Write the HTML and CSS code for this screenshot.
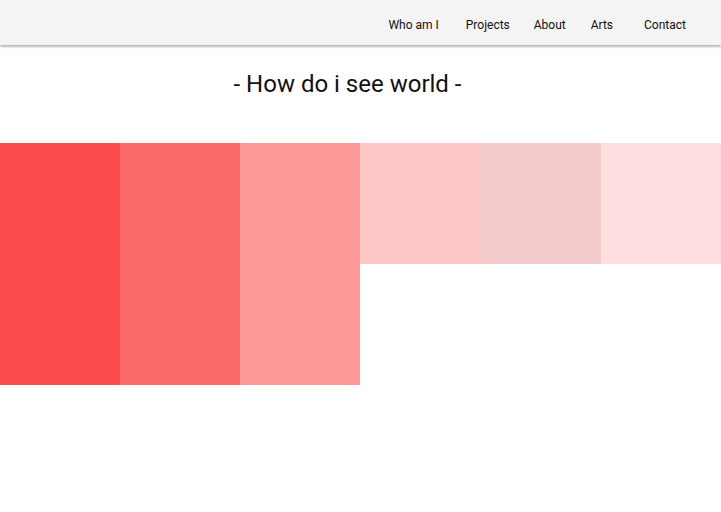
FILE: index.html
```html
<!DOCTYPE html>
<html>
<head>
<meta charset="utf-8">
<link rel="stylesheet" href="styles.css">
</head>
<body>
<header class="topbar">
  <nav class="nav">
    <a class="nav-link" href="#">Who am I</a>
    <a class="nav-link nav-projects" href="#">Projects</a>
    <a class="nav-link nav-about" href="#">About</a>
    <a class="nav-link nav-arts" href="#">Arts</a>
    <a class="nav-link nav-contact" href="#">Contact</a>
  </nav>
</header>
<main>
  <h1 class="title">- How do i see world -</h1>
  <section class="palette">
    <div class="swatch tall c1"></div>
    <div class="swatch tall c2"></div>
    <div class="swatch tall c3"></div>
    <div class="swatch c4"></div>
    <div class="swatch c5"></div>
    <div class="swatch c6"></div>
  </section>
</main>
</body>
</html>
```
FILE: styles.css
```css
html, body {
  margin: 0;
  padding: 0;
  background: #ffffff;
  font-family: Roboto, "Noto Sans", sans-serif;
}
.topbar {
  height: 45px;
  background: #f4f4f4;
  box-shadow: 0 2px 2px rgba(0, 0, 0, 0.28);
  display: flex;
  justify-content: flex-end;
  align-items: center;
  padding-right: 35px;
}
.nav {
  display: flex;
  align-items: center;
}
.nav-link {
  color: #111;
  text-decoration: none;
  font-size: 12px;
  line-height: 16px;
  padding-top: 5px;
}
.nav-projects { margin-left: 27px; }
.nav-about { margin-left: 24px; }
.nav-arts { margin-left: 25px; }
.nav-contact { margin-left: 31px; }
.title {
  margin: 25px 26px 0 0;
  font-size: 24px;
  line-height: 28px;
  font-weight: 400;
  text-align: center;
  color: #111;
}
.palette {
  margin-top: 45px;
  display: grid;
  grid-template-columns: repeat(6, 1fr);
  grid-template-rows: 121px 121px;
}
.swatch.tall {
  grid-row: span 2;
}
.c1 { background: #fc4c4c; }
.c2 { background: #fc6b6b; }
.c3 { background: #fd9999; }
.c4 { background: #fbc7c7; }
.c5 { background: #f4cbcc; }
.c6 { background: #ffdedf; }
```
